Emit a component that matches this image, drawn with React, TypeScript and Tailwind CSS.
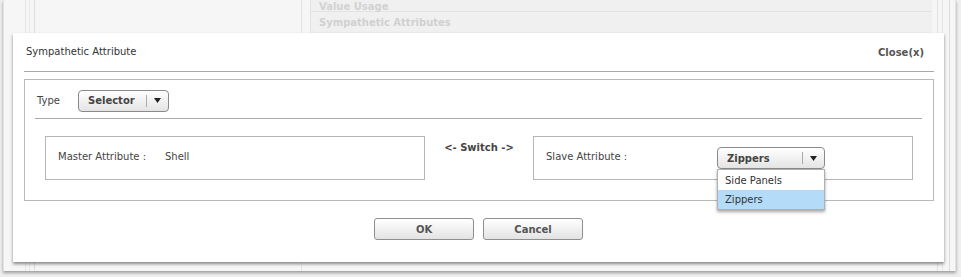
import React from "react";

const font = "font-['DejaVu_Sans',Verdana,sans-serif]";

function Caret() {
  return (
    <svg width="7" height="5" viewBox="0 0 7 5" className="shrink-0">
      <path d="M0 0 H7 L3.5 5 Z" fill="#222" />
    </svg>
  );
}

function SelectBox({ label, width }: { label: string; width: string }) {
  return (
    <div
      className={`${width} h-[22px] flex items-center rounded-[4px] border border-[#8a8a8a] bg-gradient-to-b from-white to-[#e4e4e4] shadow-[inset_0_1px_0_#fff]`}
    >
      <span className="flex-1 pl-[9px] text-[10px] font-bold text-[#444]">{label}</span>
      <span className="w-px h-[12px] bg-[#aaa]" />
      <span className="w-[21px] flex justify-center">
        <Caret />
      </span>
    </div>
  );
}

function Button({ label }: { label: string }) {
  return (
    <button className="w-[100px] h-[22px] rounded-[3px] border border-[#8f8f8f] bg-gradient-to-b from-white to-[#e3e3e3] text-[10px] font-bold text-[#555]">
      {label}
    </button>
  );
}

function Backdrop() {
  return (
    <div className="absolute inset-0 bg-[#efefef]">
      {/* page panel behind the dialog */}
      <div className="absolute left-[3px] top-0 w-[953px] h-[271px] bg-[#f6f6f6] border-x border-[#e2e2e2] shadow-[0_2px_3px_rgba(0,0,0,0.35)]">
        <div className="absolute left-[21px] top-0 bottom-0 w-px bg-[#e4e4e4]" />
        <div className="absolute left-[25px] top-0 bottom-0 w-px bg-[#e6e6e6]" />
        <div className="absolute left-[30px] top-0 bottom-0 w-px bg-[#dedede]" />
        <div className="absolute left-[297px] top-0 bottom-0 w-px bg-[#e4e4e4]" />
        <div className="absolute left-[306px] top-0 w-[622px] h-[33px] border-l border-[#e2e2e2] bg-[#f0f0f0]">
          <div className="h-[12px] border-b border-[#e3e3e3] flex items-end pl-[8px]">
            <span className="text-[10px] font-bold text-[#d2d2d2] leading-[14px] -mb-[3px]">Value Usage</span>
          </div>
          <div className="h-[20px] flex items-center pl-[8px]">
            <span className="text-[10px] font-bold text-[#d0d0d0]">Sympathetic Attributes</span>
          </div>
        </div>
        <div className="absolute left-[933px] top-0 bottom-0 w-px bg-[#e0e0e0]" />
        <div className="absolute left-[938px] top-0 bottom-0 w-px bg-[#e6e6e6]" />
        <div className="absolute left-[945px] top-0 bottom-0 w-px bg-[#dcdcdc]" />
      </div>
    </div>
  );
}

export default function App() {
  return (
    <div className={`relative w-[961px] h-[277px] overflow-hidden ${font}`}>
      <Backdrop />

      {/* dialog */}
      <div className="absolute left-[13px] top-[33px] w-[931px] h-[229px] bg-white shadow-[0_2px_3px_rgba(0,0,0,0.45)]">
        {/* Header */}
        <div className="h-[38px] flex items-center justify-between pl-[13px] pr-[20px]">
          <span className="text-[10px] text-[#333] -mt-[1px]">Sympathetic Attribute</span>
          <span className="text-[10px] font-bold text-[#555] mt-[1px]">Close(x)</span>
        </div>
        <div className="mx-[11px] mr-[10px] h-px bg-[#a8a8a8]" />

        {/* Content */}
        <div className="mt-[7px] mx-[11px] mr-[10px] h-[122px] border border-[#b9b9b9]">
          <div className="flex items-center h-[38px] pt-[3px] pl-[12px]">
            <span className="w-[41px] text-[10px] text-[#444]">Type</span>
            <SelectBox label="Selector" width="w-[91px]" />
          </div>
          <div className="ml-[10px] mr-[11px] h-px bg-[#a8a8a8]" />

          <div className="flex items-start pl-[20px] pt-[17px]">
            <div className="w-[380px] h-[44px] border border-[#b5b5b5] flex items-center pl-[12px] pb-[4px] text-[10px] text-[#444]">
              <span className="w-[107px]">Master Attribute :</span>
              <span>Shell</span>
            </div>
            <div className="w-[108px] flex justify-center pt-[4px] text-[10px] font-bold text-[#444]">
              &lt;- Switch -&gt;
            </div>
            <div className="relative w-[380px] h-[44px] border border-[#b5b5b5] flex items-start text-[10px] text-[#444]">
              <span className="w-[183px] pl-[12px] pt-[12px]">Slave Attribute :</span>
              <div className="relative pt-[10px]">
                <SelectBox label="Zippers" width="w-[108px]" />
                <div className="absolute left-0 top-[32px] w-[108px] bg-white border border-[#b0b0b0] shadow-[0_2px_3px_rgba(0,0,0,0.35)] z-10">
                  <div className="h-[20px] flex items-center pl-[7px] text-[10px] text-[#333]">Side Panels</div>
                  <div className="h-[19px] flex items-center pl-[7px] text-[10px] text-[#333] bg-[#b4dcf9]">Zippers</div>
                </div>
              </div>
            </div>
          </div>
        </div>

        {/* Footer */}
        <div className="flex justify-center gap-[9px] mt-[17px]">
          <Button label="OK" />
          <Button label="Cancel" />
        </div>
      </div>
    </div>
  );
}
